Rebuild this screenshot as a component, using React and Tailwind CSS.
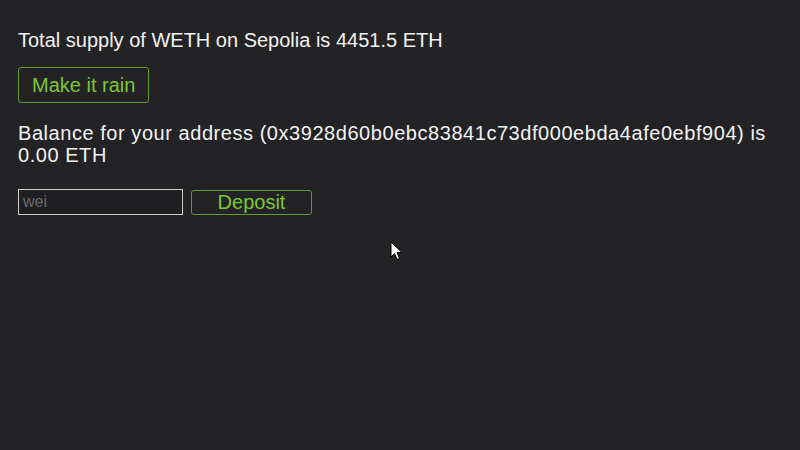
export default function App() {
  return (
    <div className="relative h-[450px] w-[800px] overflow-hidden bg-[#232325] px-[18px] pt-[29px] text-[20px] leading-[22px] text-[#f2f2f2] [font-family:'Liberation_Sans',Arial,sans-serif]">
      <p>Total supply of WETH on Sepolia is 4451.5 ETH</p>

      <button className="mt-[16px] h-[36px] rounded-[3px] border border-[#5f9c2e] px-[13px] text-[20px] text-[#7cc733]">
        Make it rain
      </button>

      <p className="mt-[19px] pr-[16px] tracking-[0.55px]">
        Balance for your address (0x3928d60b0ebc83841c73df000ebda4afe0ebf904) is 0.00 ETH
      </p>

      <div className="mt-[23px] flex items-center gap-[8px]">
        <input
          placeholder="wei"
          className="h-[26px] w-[165px] border border-[#d0d0d0] bg-[#1f1f21] px-[4px] text-[16px] text-white placeholder:text-[#6a6a6a] outline-none"
        />
        <button className="h-[25px] w-[121px] rounded-[3px] border border-[#5f9c2e] text-[20px] leading-[22px] text-[#7cc733]">
          Deposit
        </button>
      </div>

      {/* cursor */}
      <svg className="absolute left-[390px] top-[241px]" width="14" height="20" viewBox="0 0 14 20">
        <path d="M1 1 L1 16 L4.5 12.5 L7 18.5 L9.5 17.5 L7 11.5 L12 11.5 Z" fill="#fff" stroke="#000" strokeWidth="1" />
      </svg>
    </div>
  );
}
